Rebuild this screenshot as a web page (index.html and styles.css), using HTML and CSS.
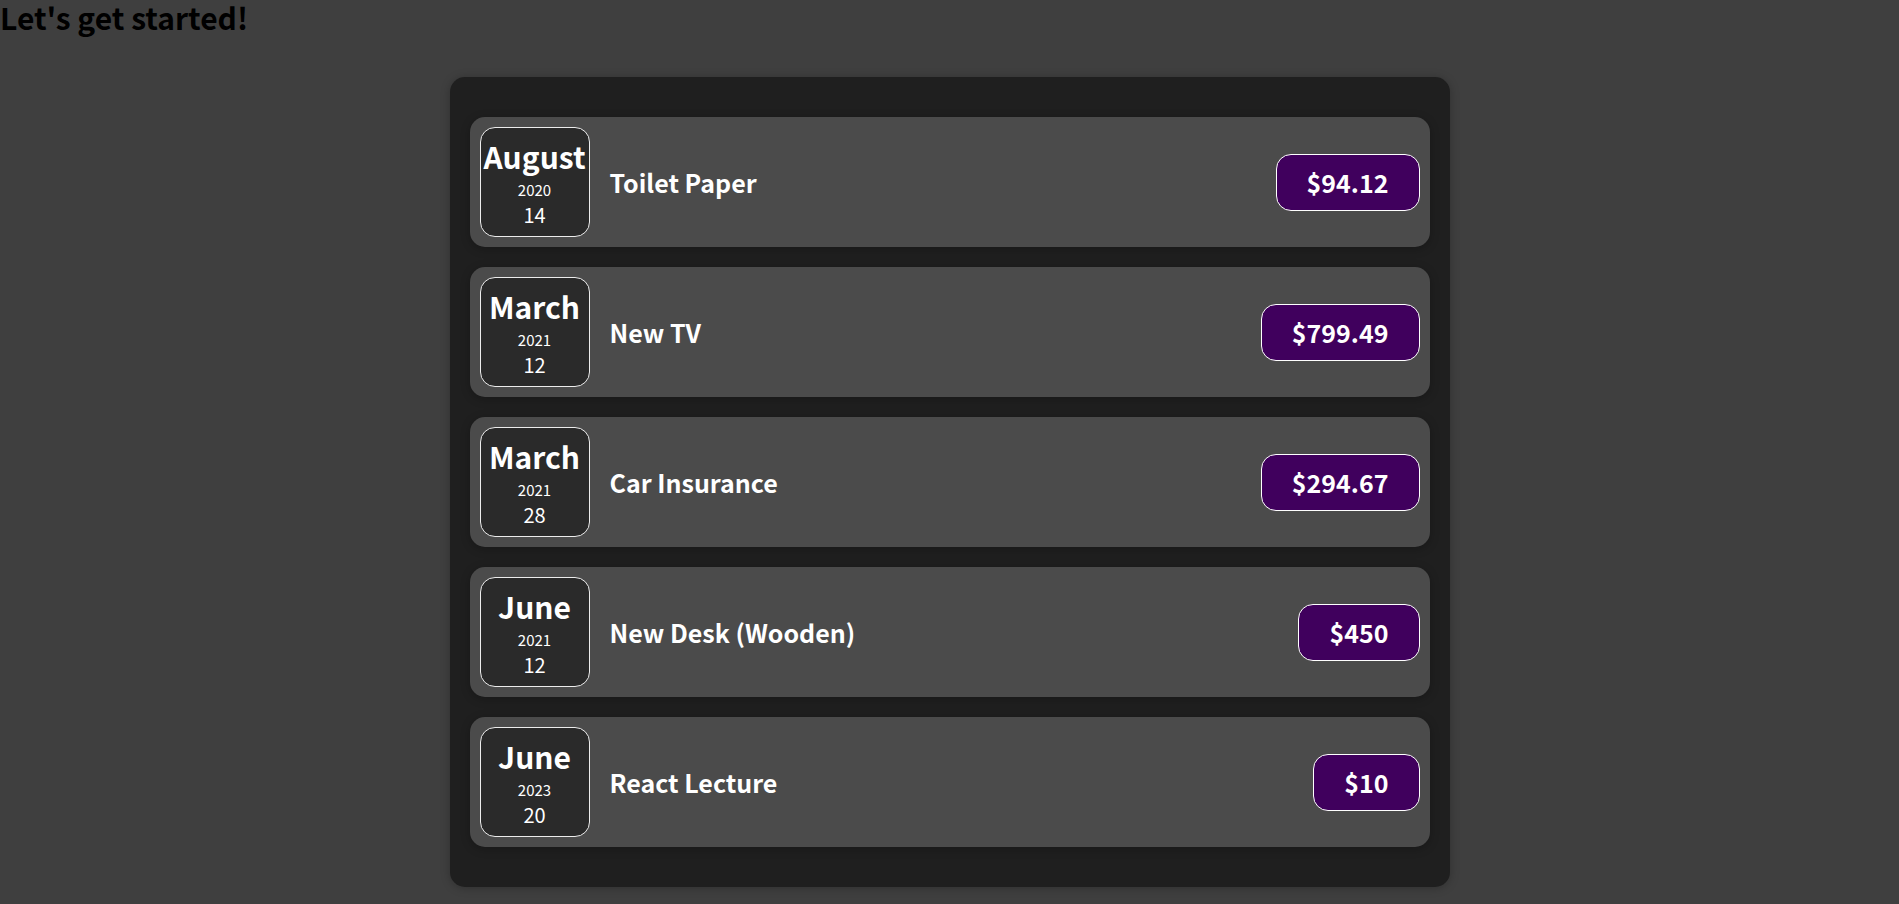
FILE: index.html
```html
<!DOCTYPE html>
<html lang="en">
<head>
  <meta charset="UTF-8">
  <meta name="viewport" content="width=device-width, initial-scale=1.0">
  <title>Expenses</title>
  <link rel="stylesheet" href="styles.css">
</head>
<body>
  <h2 class="title">Let's get started!</h2>
  <div class="expenses">
    <div class="expense-item">
      <div class="expense-date">
        <div class="expense-date__month">August</div>
        <div class="expense-date__year">2020</div>
        <div class="expense-date__day">14</div>
      </div>
      <div class="expense-item__description">
        <h2>Toilet Paper</h2>
        <div class="expense-item__price">$94.12</div>
      </div>
    </div>
    <div class="expense-item">
      <div class="expense-date">
        <div class="expense-date__month">March</div>
        <div class="expense-date__year">2021</div>
        <div class="expense-date__day">12</div>
      </div>
      <div class="expense-item__description">
        <h2>New TV</h2>
        <div class="expense-item__price">$799.49</div>
      </div>
    </div>
    <div class="expense-item">
      <div class="expense-date">
        <div class="expense-date__month">March</div>
        <div class="expense-date__year">2021</div>
        <div class="expense-date__day">28</div>
      </div>
      <div class="expense-item__description">
        <h2>Car Insurance</h2>
        <div class="expense-item__price">$294.67</div>
      </div>
    </div>
    <div class="expense-item">
      <div class="expense-date">
        <div class="expense-date__month">June</div>
        <div class="expense-date__year">2021</div>
        <div class="expense-date__day">12</div>
      </div>
      <div class="expense-item__description">
        <h2>New Desk (Wooden)</h2>
        <div class="expense-item__price">$450</div>
      </div>
    </div>
    <div class="expense-item">
      <div class="expense-date">
        <div class="expense-date__month">June</div>
        <div class="expense-date__year">2023</div>
        <div class="expense-date__day">20</div>
      </div>
      <div class="expense-item__description">
        <h2>React Lecture</h2>
        <div class="expense-item__price">$10</div>
      </div>
    </div>
  </div>
</body>
</html>
```

FILE: styles.css
```css
html {
  font-family: "Noto Sans CJK JP", sans-serif;
}
body {
  margin: 0;
  background-color: #3f3f3f;
}
.title {
  margin: 0 0 42px;
  font-size: 30px;
  line-height: 35px;
  color: #000;
}
.expenses {
  padding: 20px;
  background-color: #1f1f1f;
  margin: 40px auto;
  width: 1000px;
  box-sizing: border-box;
  border-radius: 15px;
  box-shadow: 0 1px 10px rgba(0, 0, 0, 0.25);
}
.expense-item {
  display: flex;
  align-items: center;
  padding: 10px;
  margin: 20px 0;
  border-radius: 15px;
  background-color: #4b4b4b;
  box-shadow: 0 2px 10px rgba(0, 0, 0, 0.25);
}
.expense-date {
  display: flex;
  flex-direction: column;
  align-items: center;
  justify-content: center;
  width: 110px;
  height: 110px;
  padding-bottom: 4px;
  box-sizing: border-box;
  border: 1px solid #ececec;
  background-color: #2a2a2a;
  color: #fff;
  border-radius: 15px;
}
.expense-date__month {
  font-size: 30px;
  font-weight: bold;
  line-height: 44px;
}
.expense-date__year {
  font-size: 15px;
  line-height: 24px;
}
.expense-date__day {
  font-size: 20px;
  line-height: 25px;
}
.expense-item__description {
  display: flex;
  flex: 1;
  align-items: center;
  justify-content: space-between;
}
.expense-item__description h2 {
  flex: 1;
  margin: 0 20px;
  font-size: 25px;
  color: #fff;
}
.expense-item__price {
  font-size: 25px;
  font-weight: bold;
  line-height: 37px;
  color: #fff;
  background-color: #40005d;
  border: 1px solid #fff;
  padding: 9px 30px;
  border-radius: 15px;
}
```
